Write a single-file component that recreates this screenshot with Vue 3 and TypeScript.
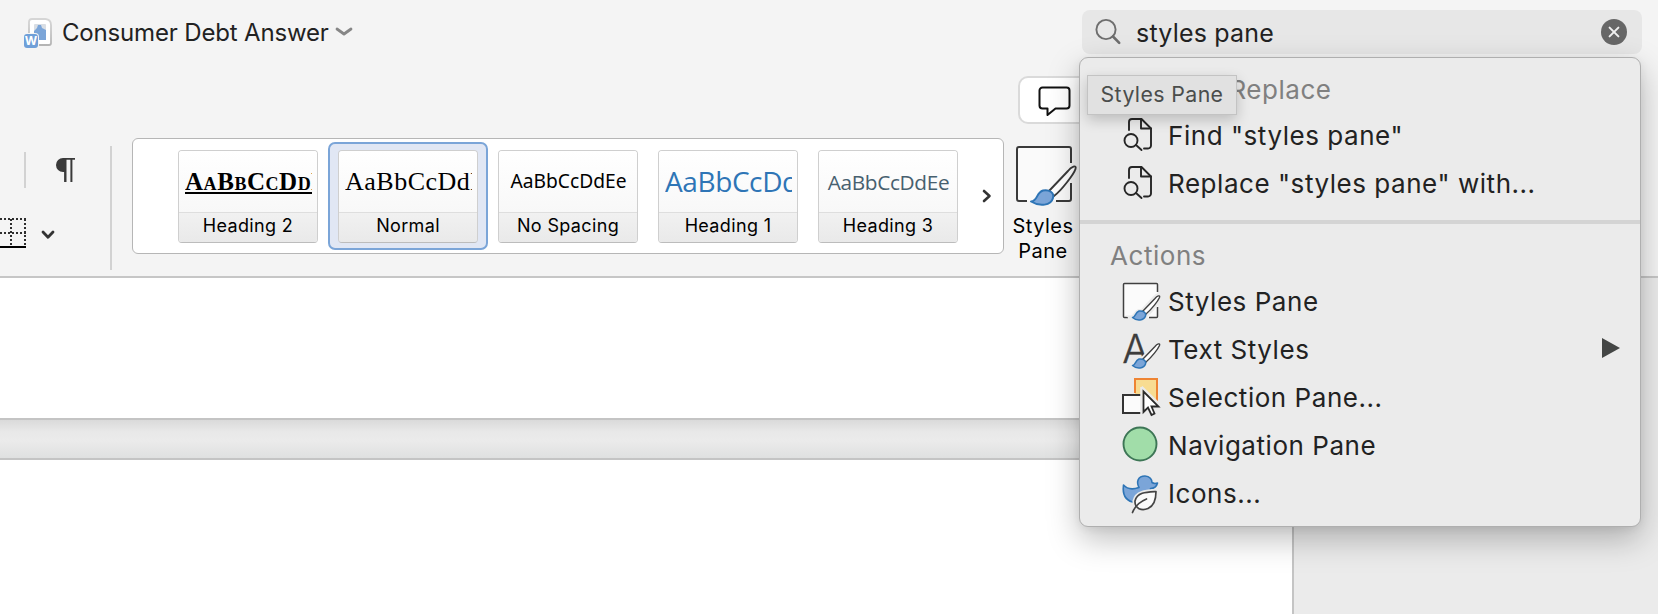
<script setup lang="ts">
interface StyleCell {
  name: string
  sample: string
  kind: string
  selected?: boolean
}
interface MenuEntry {
  label: string
  icon: string
  submenu?: boolean
}

const query = 'styles pane'

const gallery: StyleCell[] = [
  { name: 'Heading 2', sample: 'AaBbCcDdEe', kind: 'h2' },
  { name: 'Normal', sample: 'AaBbCcDdEe', kind: 'normal', selected: true },
  { name: 'No Spacing', sample: 'AaBbCcDdEe', kind: 'nospace' },
  { name: 'Heading 1', sample: 'AaBbCcDdEe', kind: 'h1' },
  { name: 'Heading 3', sample: 'AaBbCcDdEe', kind: 'h3' },
]

const findEntries: MenuEntry[] = [
  { label: `Find "${query}"`, icon: 'find' },
  { label: `Replace "${query}" with...`, icon: 'find' },
]

const actionEntries: MenuEntry[] = [
  { label: 'Styles Pane', icon: 'styles' },
  { label: 'Text Styles', icon: 'text', submenu: true },
  { label: 'Selection Pane...', icon: 'selection' },
  { label: 'Navigation Pane', icon: 'navigation' },
  { label: 'Icons...', icon: 'icons' },
]

const groups = [
  { title: 'Find and Replace', key: 'find', entries: findEntries },
  { title: 'Actions', key: 'actions', entries: actionEntries },
]
</script>

<template>
  <div class="window">
    <header class="ribbon">
      <div class="titlebar">
        <svg class="doc-icon" width="30" height="32" viewBox="0 0 30 32">
          <defs>
            <linearGradient id="docEdge" x1="0" y1="0" x2="0" y2="1">
              <stop offset="0" stop-color="#d6d6d6" />
              <stop offset="1" stop-color="#b4b4b4" />
            </linearGradient>
          </defs>
          <path d="M8 3H21.500q5.500 0.500 5.500 6V27a2 2 0 0 1-2 2H7a2 2 0 0 1-2-2V6a3 3 0 0 1 3-3z" fill="#fff" stroke="url(#docEdge)" stroke-width="1.800" stroke-linejoin="round" />
          <rect x="10" y="8" width="12" height="16" rx="1" fill="#d9dee4" />
          <path d="M10 15l3-3 1-3h3l1 3 4 2v10H10z" fill="#7ba5d8" />
          <rect x="-1" y="17" width="16" height="16" rx="4" fill="#f4f4f4" />
          <rect x="0" y="18" width="14" height="14" rx="3" fill="#6f9fd8" />
          <text x="7" y="29.2" class="badge-letter" text-anchor="middle">W</text>
        </svg>
        <span class="doc-title">Consumer Debt Answer</span>
        <svg class="title-chevron" width="18" height="12" viewBox="0 0 18 12">
          <path d="M2 3l7 5 7-5" fill="none" stroke="#868686" stroke-width="2.8" stroke-linecap="round" stroke-linejoin="round" />
        </svg>
        <div class="search">
          <svg width="28" height="28" viewBox="0 0 28 28">
            <circle cx="11" cy="11.5" r="9.6" fill="none" stroke="#6e6e6e" stroke-width="1.9" />
            <path d="M18 18.5l6.2 6.3" stroke="#6e6e6e" stroke-width="2.6" stroke-linecap="round" />
          </svg>
          <span class="query">{{ query }}</span>
          <svg class="clear" width="26" height="26" viewBox="0 0 26 26">
            <circle cx="13" cy="13" r="13" fill="#676767" />
            <path d="M8.6 8.6l8.8 8.8M17.4 8.6l-8.8 8.8" stroke="#f0f0f0" stroke-width="2" stroke-linecap="round" />
          </svg>
        </div>
      </div>

      <div class="comment-row">
        <div class="comment-btn">
          <svg width="34" height="32" viewBox="0 0 34 32">
            <path d="M4.500 1.500h24a3 3 0 0 1 3 3v15a3 3 0 0 1-3 3H17.500l-8 6.500V22.500H4.500a3 3 0 0 1-3-3V4.500a3 3 0 0 1 3-3z" fill="#fff" stroke="#111" stroke-width="2" stroke-linejoin="round" />
          </svg>
        </div>
      </div>

      <div class="tools">
        <div class="paragraph-tools">
          <div class="tool-line top">
            <span class="short-rule"></span>
            <svg width="22" height="26" viewBox="0 0 22 26">
              <path d="M9 1H20V2.800H17.400V25H15.400V2.800H11.500V25H9.100V15H8A7 7 0 0 1 8 1z" fill="#3a3a3a" />
            </svg>
          </div>
          <div class="tool-line bottom">
            <svg width="26" height="30" viewBox="0 0 26 30">
              <path d="M0 1H26M0 15H26M11 1V27M25 1V27" fill="none" stroke="#2e2e2e" stroke-width="2" stroke-dasharray="2 2" />
              <path d="M0 29H26" stroke="#000" stroke-width="2" />
            </svg>
            <svg class="small-chevron" width="14" height="12" viewBox="0 0 14 12">
              <path d="M2 3l5 5.200 5-5.200" fill="none" stroke="#333" stroke-width="2.8" stroke-linecap="round" stroke-linejoin="round" />
            </svg>
          </div>
        </div>
        <span class="long-rule"></span>
        <div class="gallery">
          <div v-for="cell in gallery" :key="cell.name" class="slot" :class="{ selected: cell.selected }">
            <div class="cell">
              <div class="sample" :class="cell.kind"><span>{{ cell.sample }}</span></div>
              <div class="label">{{ cell.name }}</div>
            </div>
          </div>
          <svg class="more" width="12" height="14" viewBox="0 0 12 14">
            <path d="M3 2l5.500 5L3 12" fill="none" stroke="#333" stroke-width="2.6" stroke-linecap="round" stroke-linejoin="round" />
          </svg>
        </div>
        <div class="styles-btn">
          <svg width="62" height="62" viewBox="0 0 62 62">
            <rect x="1" y="1" width="54" height="54" rx="2" fill="#fafafa" />
            <path d="M11 55H3a2 2 0 0 1-2-2V3a2 2 0 0 1 2-2h50a2 2 0 0 1 2 2V17M55 37V53a2 2 0 0 1-2 2H40" fill="none" stroke="#3a3a3a" stroke-width="2" />
            <path d="M33 45L52 25C55 21 61 18 59.500 23C58 28 45 45 38 50z" fill="#fff" stroke="#3a3a3a" stroke-width="1.9" stroke-linejoin="round" />
            <path d="M15 55.500C22 55 20 46.500 27 44.500C33 43 38.500 47 37 52C35 59.500 24 61 15 55.500z" fill="#7ba5d8" stroke="#2e75b6" stroke-width="2" stroke-linejoin="round" />
          </svg>
          <div class="btn-text"><span>Styles</span><span>Pane</span></div>
        </div>
      </div>
    </header>

    <main class="canvas">
      <div class="page first"></div>
      <div class="gap"></div>
      <div class="page second"></div>
    </main>

    <div class="menu">
      <section v-for="group in groups" :key="group.key" class="group" :class="group.key">
        <h2>{{ group.title }}</h2>
        <div v-for="entry in group.entries" :key="entry.label" class="entry">
          <svg width="42" height="44" viewBox="0 0 42 44">
            <g v-if="entry.icon === 'find'" fill="none" stroke="#262626" stroke-width="1.9" stroke-linecap="round" stroke-linejoin="round">
              <path d="M9 16V8a3 3 0 0 1 3-3H21.500l9.500 9.500V31.500a3 3 0 0 1-3 3H24" />
              <path d="M21 5V14.500H31" />
              <circle cx="11" cy="26.500" r="6.500" />
              <path d="M16 31L21.500 36" />
            </g>
            <g v-else-if="entry.icon === 'styles'">
              <rect x="3.500" y="3.500" width="34" height="34" fill="#fbfbfb" />
              <path d="M8 37.500H4.500a1 1 0 0 1-1-1V4.500a1 1 0 0 1 1-1h32a1 1 0 0 1 1 1V12M37.500 27V36.500a1 1 0 0 1-1 1H29" fill="none" stroke="#404040" stroke-width="1.5" />
            </g>
            <text v-else-if="entry.icon === 'text'" x="15.500" y="34.500" class="a-glyph" text-anchor="middle">A</text>
            <g v-else-if="entry.icon === 'selection'">
              <path d="M15 3H37V25L15 19z" fill="#f8dc92" />
              <path d="M15 17V3H37V25" fill="none" stroke="#ee8433" stroke-width="2" />
              <path d="M21 19H3V37H21" fill="#fbfbfb" stroke="#333" stroke-width="2" />
              <path d="M21.500 11V40M21.500 11L40 29" stroke="#ebebeb" stroke-width="2.500" />
              <path d="M23.500 15.500V36L28 31.500L31.500 39L34.500 37.500L31.500 30.500H38.500z" fill="#fff" stroke="#2b2b2b" stroke-width="1.8" />
            </g>
            <circle v-else-if="entry.icon === 'navigation'" cx="20" cy="20" r="16.500" fill="#a1dda9" stroke="#3d7656" stroke-width="1.900" />
            <g v-else>
              <path d="M3.500 13C7 17 12 18 19 15.500C16 10 18 4 25 4C30 4 32 8 32 10.500C34 12 36 11.500 37.500 11C36.500 15 33.500 16.500 30.500 16.500C31 25 22 31 12.500 30C5 28 2.500 21 3.500 13z" fill="#7ba5d8" stroke="#2e75b6" stroke-width="1.6" stroke-linejoin="round" />
              <path d="M36 19.500C27 20 17 20 15 29C14.500 37 22 39 28 36.500C35 33.500 36 26 36 19.500z" fill="#fbfbfb" stroke="#ebebeb" stroke-width="5" />
              <path d="M36 19.500C27 20 17 20 15 29C14.500 37 22 39 28 36.500C35 33.500 36 26 36 19.500z" fill="#fbfbfb" stroke="#444" stroke-width="1.700" stroke-linejoin="round" />
              <path d="M12.500 40.500C15 34 19 30 26.500 27" fill="none" stroke="#444" stroke-width="1.700" stroke-linecap="round" />
            </g>
            <g v-if="entry.icon === 'styles' || entry.icon === 'text'">
              <path d="M22 32L35 18C37 15.500 40.500 14.500 39.500 17.500C38 21 32 29 26 35z" fill="#fff" stroke="#ebebeb" stroke-width="5" />
              <path d="M11 37.500C15.500 37.500 14.500 32.500 19 31C23.500 30.500 26.500 33 25.500 36C24 41 16 41.500 11 37.500z" fill="#7ba5d8" stroke="#ebebeb" stroke-width="4" />
              <path d="M22.500 31.500L35 18.500C37 16 40.500 14.500 39.500 17.500C38 21 32 29 26 34z" fill="#fff" stroke="#404040" stroke-width="1.400" stroke-linejoin="round" />
              <path d="M12.500 37.500C15.500 37.500 15 32.500 19 31C23.500 30.500 26.500 33 25.500 36C24 40.500 17 41.500 12.500 37.500z" fill="#7ba5d8" stroke="#2e75b6" stroke-width="1.500" stroke-linejoin="round" />
            </g>
          </svg>
          <span class="entry-label">{{ entry.label }}</span>
          <svg v-if="entry.submenu" class="arrow" width="18" height="20" viewBox="0 0 18 20">
            <path d="M0 0L18 10L0 20z" fill="#444645" />
          </svg>
        </div>
      </section>
    </div>

    <div class="tooltip">Styles Pane</div>
  </div>
</template>

<style>
html,
body {
  overflow: hidden;
}
</style>

<style scoped>
.window {
  position: relative;
  width: 1658px;
  height: 614px;
  overflow: hidden;
  background: #ebebeb;
  font-family: Inter, "Liberation Sans", sans-serif;
  color: #222;
}
.window * {
  box-sizing: border-box;
}
svg {
  display: block;
  flex: none;
}
.ribbon {
  height: 278px;
  background: #f4f4f4;
  border-bottom: 2px solid #c6c6c6;
}
.titlebar {
  display: flex;
  align-items: center;
  height: 64px;
  padding: 0 16px 0 24px;
}
.badge-letter {
  font: 700 12px Inter, sans-serif;
  fill: #fff;
}
.doc-title {
  margin-left: 8px;
  width: 266px;
  font-size: 24px;
  letter-spacing: -0.17px;
  line-height: 62px;
  padding-top: 2px;
  white-space: nowrap;
}
.title-chevron {
  margin-left: 7px;
}
.search {
  display: flex;
  align-items: center;
  width: 560px;
  height: 44px;
  margin-left: auto;
  padding: 0 15px 0 13px;
  border-radius: 8px;
  background: #e7e7e7;
}
.query {
  margin-left: 13px;
  padding-top: 2px;
  font-size: 25px;
  letter-spacing: 0.2px;
  line-height: 42px;
  color: #222;
}
.clear {
  margin-left: auto;
}
.comment-row {
  height: 74px;
  padding: 12px 0 0 1018px;
}
.comment-btn {
  width: 160px;
  height: 48px;
  padding: 8px 0 0 18px;
  border: 2px solid #dadada;
  border-radius: 10px;
  background: #fff;
}
.tools {
  display: flex;
  align-items: flex-start;
}
.paragraph-tools {
  width: 110px;
  padding-top: 14px;
}
.tool-line {
  display: flex;
  align-items: center;
}
.tool-line.top {
  height: 36px;
  padding-left: 24px;
}
.short-rule {
  width: 2px;
  height: 36px;
  margin-right: 29px;
  background: #d2d2d2;
}
.tool-line.bottom {
  margin-top: 30px;
}
.small-chevron {
  margin: 4px 0 0 15px;
}
.long-rule {
  width: 2px;
  height: 124px;
  margin-top: 8px;
  background: #d2d2d2;
}
.gallery {
  display: flex;
  align-items: center;
  width: 872px;
  height: 116px;
  margin-left: 20px;
  padding-left: 35px;
  border: 1px solid #b6b6b6;
  border-radius: 6px;
  background: #fff;
}
.slot {
  width: 160px;
  height: 108px;
  padding: 6px 8px;
  border: 2px solid transparent;
  border-radius: 7px;
}
.slot.selected {
  border-color: #7ba5d8;
  background: #e1e7f4;
}
.cell {
  height: 93px;
  border: 1px solid #cfcfcf;
  border-bottom-color: #bcbcbc;
  border-radius: 4px;
  overflow: hidden;
}
.sample {
  height: 61px;
  padding: 0 5px 0 6px;
  background: linear-gradient(#fff, #f8f8f8);
}
.sample span {
  display: block;
  height: 61px;
  overflow: hidden;
  white-space: nowrap;
  color: #000;
}
.h2 span {
  font: bold 25px/62px "Liberation Serif", serif;
  letter-spacing: 0.55px;
  font-variant: small-caps;
  text-decoration: underline;
  text-decoration-thickness: 2px;
  text-underline-offset: 2px;
}
.normal span {
  font: 26px/61px "Liberation Serif", serif;
  letter-spacing: 0.5px;
}
.nospace span {
  font: 19.2px/60px "Noto Sans", sans-serif;
  text-align: center;
}
.h1 span {
  font: 28px/61px "Open Sans", sans-serif;
  letter-spacing: -0.4px;
  color: #2e75b6;
}
.h3 span {
  font: 20.8px/62px "Open Sans", sans-serif;
  letter-spacing: -0.35px;
  text-align: center;
  color: #47606f;
}
.label {
  height: 31px;
  border-top: 1px solid #dedede;
  background: linear-gradient(#f1f1f1, #e9e9e9);
  font-size: 18px;
  line-height: 26px;
  letter-spacing: 0.35px;
  text-align: center;
  color: #000;
}
.more {
  margin-left: 13px;
}
.styles-btn {
  margin: 8px 0 0 12px;
}
.btn-text {
  display: flex;
  flex-direction: column;
  align-items: center;
  width: 62px;
  margin: 6px 0 0 -4px;
  font-size: 20px;
  letter-spacing: 0.5px;
  line-height: 25px;
  color: #000;
}
.page {
  width: 1294px;
  background: #fff;
  border-right: 2px solid #c4c4c4;
}
.first {
  height: 142px;
  border-bottom: 2px solid #c4c4c4;
}
.gap {
  width: 1294px;
  height: 38px;
  background: linear-gradient(#dadada, #e8e8e8 30%, #ebebeb 55%, #dfe0e0);
}
.second {
  height: 156px;
  border-top: 2px solid #c4c4c4;
}
.menu {
  position: absolute;
  left: 1079px;
  top: 57px;
  width: 562px;
  height: 470px;
  border: 1px solid #afafaf;
  border-radius: 9px;
  background: #ebebeb;
  box-shadow: 0 12px 32px rgba(0, 0, 0, 0.26), 0 2px 8px rgba(0, 0, 0, 0.06);
}
.group.find {
  height: 166px;
  padding-top: 8px;
  border-bottom: 4px solid #d4d4d4;
}
.group h2 {
  height: 46px;
  margin: 0;
  padding-left: 31px;
  font-size: 26px;
  font-weight: 400;
  letter-spacing: 0.55px;
  line-height: 48px;
  color: #808080;
}
.group.actions h2 {
  height: 54px;
  padding-left: 30px;
  line-height: 64px;
}
.entry {
  display: flex;
  align-items: center;
  height: 48px;
  padding: 0 20px 0 40px;
}
.entry-label {
  margin-left: 6px;
  font-size: 26px;
  letter-spacing: 0.54px;
  line-height: 48px;
  color: #222;
}
.arrow {
  margin: -4px 0 0 auto;
}
.a-glyph {
  font: 300 39px Inter, sans-serif;
  fill: #3c3c3c;
  stroke: #3c3c3c;
  stroke-width: 0.3px;
}
.tooltip {
  position: absolute;
  left: 1087px;
  top: 75px;
  width: 150px;
  height: 40px;
  border: 1px solid #c3c3c3;
  background: #e1e1e1;
  box-shadow: 0 5px 14px rgba(0, 0, 0, 0.2);
  font-size: 21.3px;
  line-height: 37px;
  letter-spacing: 0.4px;
  text-align: center;
  white-space: nowrap;
  color: #4a4d4c;
}
</style>
